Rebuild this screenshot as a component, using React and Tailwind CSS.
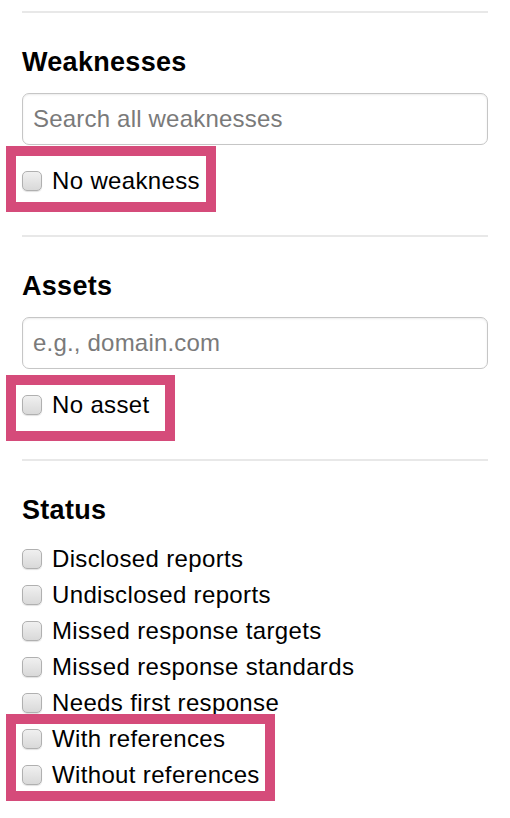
import React from 'react';

const font = { fontFamily: '"Liberation Sans", Arial, Helvetica, sans-serif' };

const Checkbox = () => (
    <span className="w-[20px] h-[20px] shrink-0 rounded-[5px] border border-[#b0b0b0] bg-gradient-to-b from-[#f0f0f0] to-[#d9d9d9] shadow-[0_1px_1px_rgba(0,0,0,0.12)]" />
);

const Row = ({ label }) => (
    <label className="flex items-center h-[36px] gap-[10px] text-[24px] leading-[36px] tracking-[0.35px] text-black">
        <Checkbox />
        <span>{label}</span>
    </label>
);

// hand-drawn annotation box that sits over a row
const Mark = ({ className }) => (
    <div className={`absolute border-[10px] border-[#d54b7a] pointer-events-none ${className}`} />
);

const Section = ({ title, placeholder, option, markClass }) => (
    <div className="pb-[36px]">
        <div className="h-[2px] bg-[#e8e8e8]" />
        <h3 className="mt-[33px] text-[27px] leading-[32px] font-bold tracking-[0.3px] text-black">{title}</h3>
        <input
            className="mt-[15px] w-full h-[52px] px-[10px] rounded-[7px] border-[1.5px] border-[#c6c6c6] shadow-[inset_0_1px_2px_rgba(0,0,0,0.08)] text-[24px] tracking-[0.2px] placeholder:text-[#7a7a7a] outline-none"
            style={font}
            placeholder={placeholder}
        />
        <div className="relative mt-[18px]">
            <Row label={option} />
            <Mark className={markClass} />
        </div>
    </div>
);

export default function App() {
    const status = [
        'Disclosed reports',
        'Undisclosed reports',
        'Missed response targets',
        'Missed response standards',
        'Needs first response',
    ];

    return (
        <div className="w-[510px] h-[818px] bg-white overflow-hidden" style={font}>
            <div className="pt-[11px] pl-[22px] pr-[22px]">
                <Section
                    title="Weaknesses"
                    placeholder="Search all weaknesses"
                    option="No weakness"
                    markClass="-left-[16px] -top-[17px] w-[210px] h-[66px]"
                />
                <Section
                    title="Assets"
                    placeholder="e.g., domain.com"
                    option="No asset"
                    markClass="-left-[16px] -top-[12px] w-[169px] h-[66px]"
                />

                {/* Status */}
                <div>
                    <div className="h-[2px] bg-[#e8e8e8]" />
                    <h3 className="mt-[33px] text-[27px] leading-[32px] font-bold tracking-[0.3px] text-black">Status</h3>
                    <div className="mt-[15px] flex flex-col">
                        {status.map((s) => (
                            <Row key={s} label={s} />
                        ))}
                        <div className="relative">
                            <Row label="With references" />
                            <Row label="Without references" />
                            <Mark className="-left-[16px] -top-[7px] w-[269px] h-[87px]" />
                        </div>
                    </div>
                </div>
            </div>
        </div>
    );
}
